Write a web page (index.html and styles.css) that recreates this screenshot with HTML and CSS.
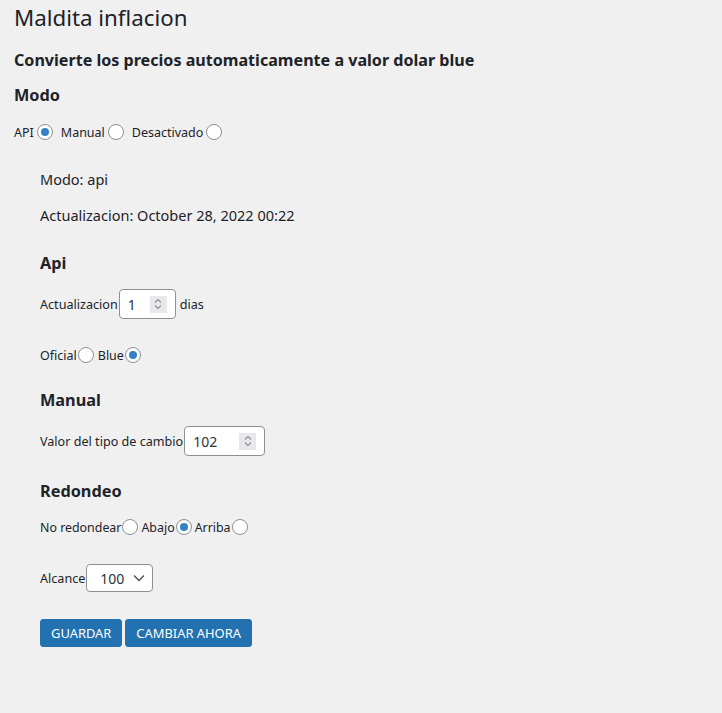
FILE: index.html
```html
<!DOCTYPE html>
<html lang="es">
<head>
<meta charset="utf-8">
<title>Maldita inflacion</title>
<link rel="stylesheet" href="styles.css">
</head>
<body>
<div class="wrap">
  <h1 class="title">Maldita inflacion</h1>
  <h2 class="subtitle">Convierte los precios automaticamente a valor dolar blue</h2>
  <h2 class="section-title">Modo</h2>
  <div class="radio-row row-modo">
    <label class="opt">API<input type="radio" name="modo" checked></label>
    <label class="opt">Manual<input type="radio" name="modo"></label>
    <label class="opt">Desactivado<input type="radio" name="modo"></label>
  </div>

  <div class="inner">
    <p class="info first">Modo: api</p>
    <p class="info">Actualizacion: October 28, 2022 00:22</p>

    <h3 class="sub-head">Api</h3>
    <div class="field-row">
      <span class="lbl">Actualizacion</span>
      <span class="num num-small"><input type="text" value="1"><span class="spin"><svg width="10" height="14" viewBox="0 0 10 14"><path d="M2 5.5 5 2.5 8 5.5M2 8.5 5 11.5 8 8.5" fill="none" stroke="#8c8f94" stroke-width="1.1"/></svg></span></span>
      <span class="lbl after">dias</span>
    </div>
    <div class="radio-row row-oficial">
      <label class="opt">Oficial<input type="radio" name="tipo"></label>
      <label class="opt">Blue<input type="radio" name="tipo" checked></label>
    </div>

    <h3 class="sub-head head-manual">Manual</h3>
    <div class="field-row">
      <span class="lbl">Valor del tipo de cambio</span>
      <span class="num num-wide"><input type="text" value="102"><span class="spin"><svg width="10" height="14" viewBox="0 0 10 14"><path d="M2 5.5 5 2.5 8 5.5M2 8.5 5 11.5 8 8.5" fill="none" stroke="#8c8f94" stroke-width="1.1"/></svg></span></span>
    </div>

    <h3 class="sub-head head-red">Redondeo</h3>
    <div class="radio-row row-red">
      <label class="opt">No redondear<input type="radio" name="red"></label>
      <label class="opt">Abajo<input type="radio" name="red" checked></label>
      <label class="opt">Arriba<input type="radio" name="red"></label>
    </div>

    <div class="field-row select-row">
      <span class="lbl">Alcance</span>
      <span class="select-wrap">
        <select><option>100</option></select>
        <svg class="chev" width="12" height="8" viewBox="0 0 12 8"><path d="M1 1.5 6 6.5 11 1.5" fill="none" stroke="#50575e" stroke-width="1.5"/></svg>
      </span>
    </div>

    <div class="buttons">
      <button class="btn">GUARDAR</button>
      <button class="btn">CAMBIAR AHORA</button>
    </div>
  </div>
</div>
</body>
</html>
```
FILE: styles.css
```css
html, body {
  margin: 0;
  padding: 0;
  background: #f0f0f1;
}
body {
  font-family: "Noto Sans", "Open Sans", sans-serif;
  color: #1d2327;
  font-size: 13px;
  width: 722px;
  height: 713px;
  overflow: hidden;
}
.wrap {
  padding: 0 14px;
}
.title {
  font-size: 22.3px;
  font-weight: 400;
  line-height: 1.3;
  margin: 0;
  padding: 3px 0 0;
  height: 31px;
}
.subtitle {
  font-size: 16.1px;
  font-weight: 700;
  margin: 16px 0 0;
  line-height: 20px;
}
.section-title {
  font-size: 16.3px;
  font-weight: 700;
  margin: 15px 0 0;
  line-height: 20px;
}
.radio-row {
  display: flex;
  align-items: center;
  height: 20px;
  font-size: 12.5px;
}
.row-modo {
  gap: 8px;
  margin-top: 17px;
}
.row-modo .opt {
  gap: 3px;
}
.row-oficial {
  gap: 4px;
  margin-top: 26px;
}
.row-red {
  gap: 3px;
  margin-top: 16px;
  font-size: 12.4px;
}
.opt {
  display: inline-flex;
  align-items: center;
  gap: 1px;
}
input[type="radio"] {
  appearance: none;
  -webkit-appearance: none;
  width: 16px;
  height: 16px;
  margin: 0;
  border: 1px solid #8c8f94;
  border-radius: 50%;
  background: #fff;
  box-sizing: border-box;
  display: inline-flex;
  align-items: center;
  justify-content: center;
}
input[type="radio"]:checked::before {
  content: "";
  width: 8px;
  height: 8px;
  border-radius: 50%;
  background: #3582c4;
}
.inner {
  padding-left: 26px;
}
.info {
  margin: 0;
  font-size: 14.5px;
  line-height: 20px;
}
.info.first {
  margin-top: 27px;
}
.info + .info {
  margin-top: 16px;
}
.sub-head {
  font-size: 16.3px;
  font-weight: 700;
  margin: 28px 0 0;
  line-height: 20px;
}
.head-manual {
  margin-top: 25px;
}
.head-red {
  margin-top: 25px;
}
.field-row {
  display: flex;
  align-items: center;
  margin-top: 16px;
  font-size: 12.6px;
  height: 30px;
}
.lbl {
  margin-right: 1px;
}
.lbl.after {
  margin-left: 4px;
}
.num {
  display: inline-flex;
  align-items: center;
  height: 30px;
  box-sizing: border-box;
  border: 1px solid #8c8f94;
  border-radius: 4px;
  background: #fff;
  padding: 0 8px 0 8px;
}
.num input {
  border: 0;
  outline: 0;
  padding: 0;
  margin: 0;
  font: inherit;
  font-size: 14px;
  color: #2c3338;
  background: transparent;
  flex: 1;
  min-width: 0;
}
.num-small { width: 57px; }
.num-wide { width: 81px; }
.spin {
  width: 17px;
  height: 17px;
  background: #e8e8ec;
  display: flex;
  align-items: center;
  justify-content: center;
}
.select-row {
  margin-top: 27px;
  height: 28px;
}
.select-wrap {
  position: relative;
  display: inline-block;
}
.select-wrap select {
  appearance: none;
  -webkit-appearance: none;
  width: 67px;
  height: 28px;
  box-sizing: border-box;
  border: 1px solid #8c8f94;
  border-radius: 4px;
  background: #fff;
  font: inherit;
  font-size: 14px;
  color: #2c3338;
  padding: 0 24px 0 13px;
  margin: 0;
}
.chev {
  position: absolute;
  right: 8px;
  top: 10px;
  pointer-events: none;
}
.buttons {
  display: flex;
  gap: 3px;
  margin-top: 27px;
}
.btn {
  font: inherit;
  font-size: 12.9px;
  height: 28px;
  padding: 0 10px;
  background: #2271b1;
  color: #fff;
  border: 1px solid #2271b1;
  border-radius: 3px;
  margin: 0;
}
```
